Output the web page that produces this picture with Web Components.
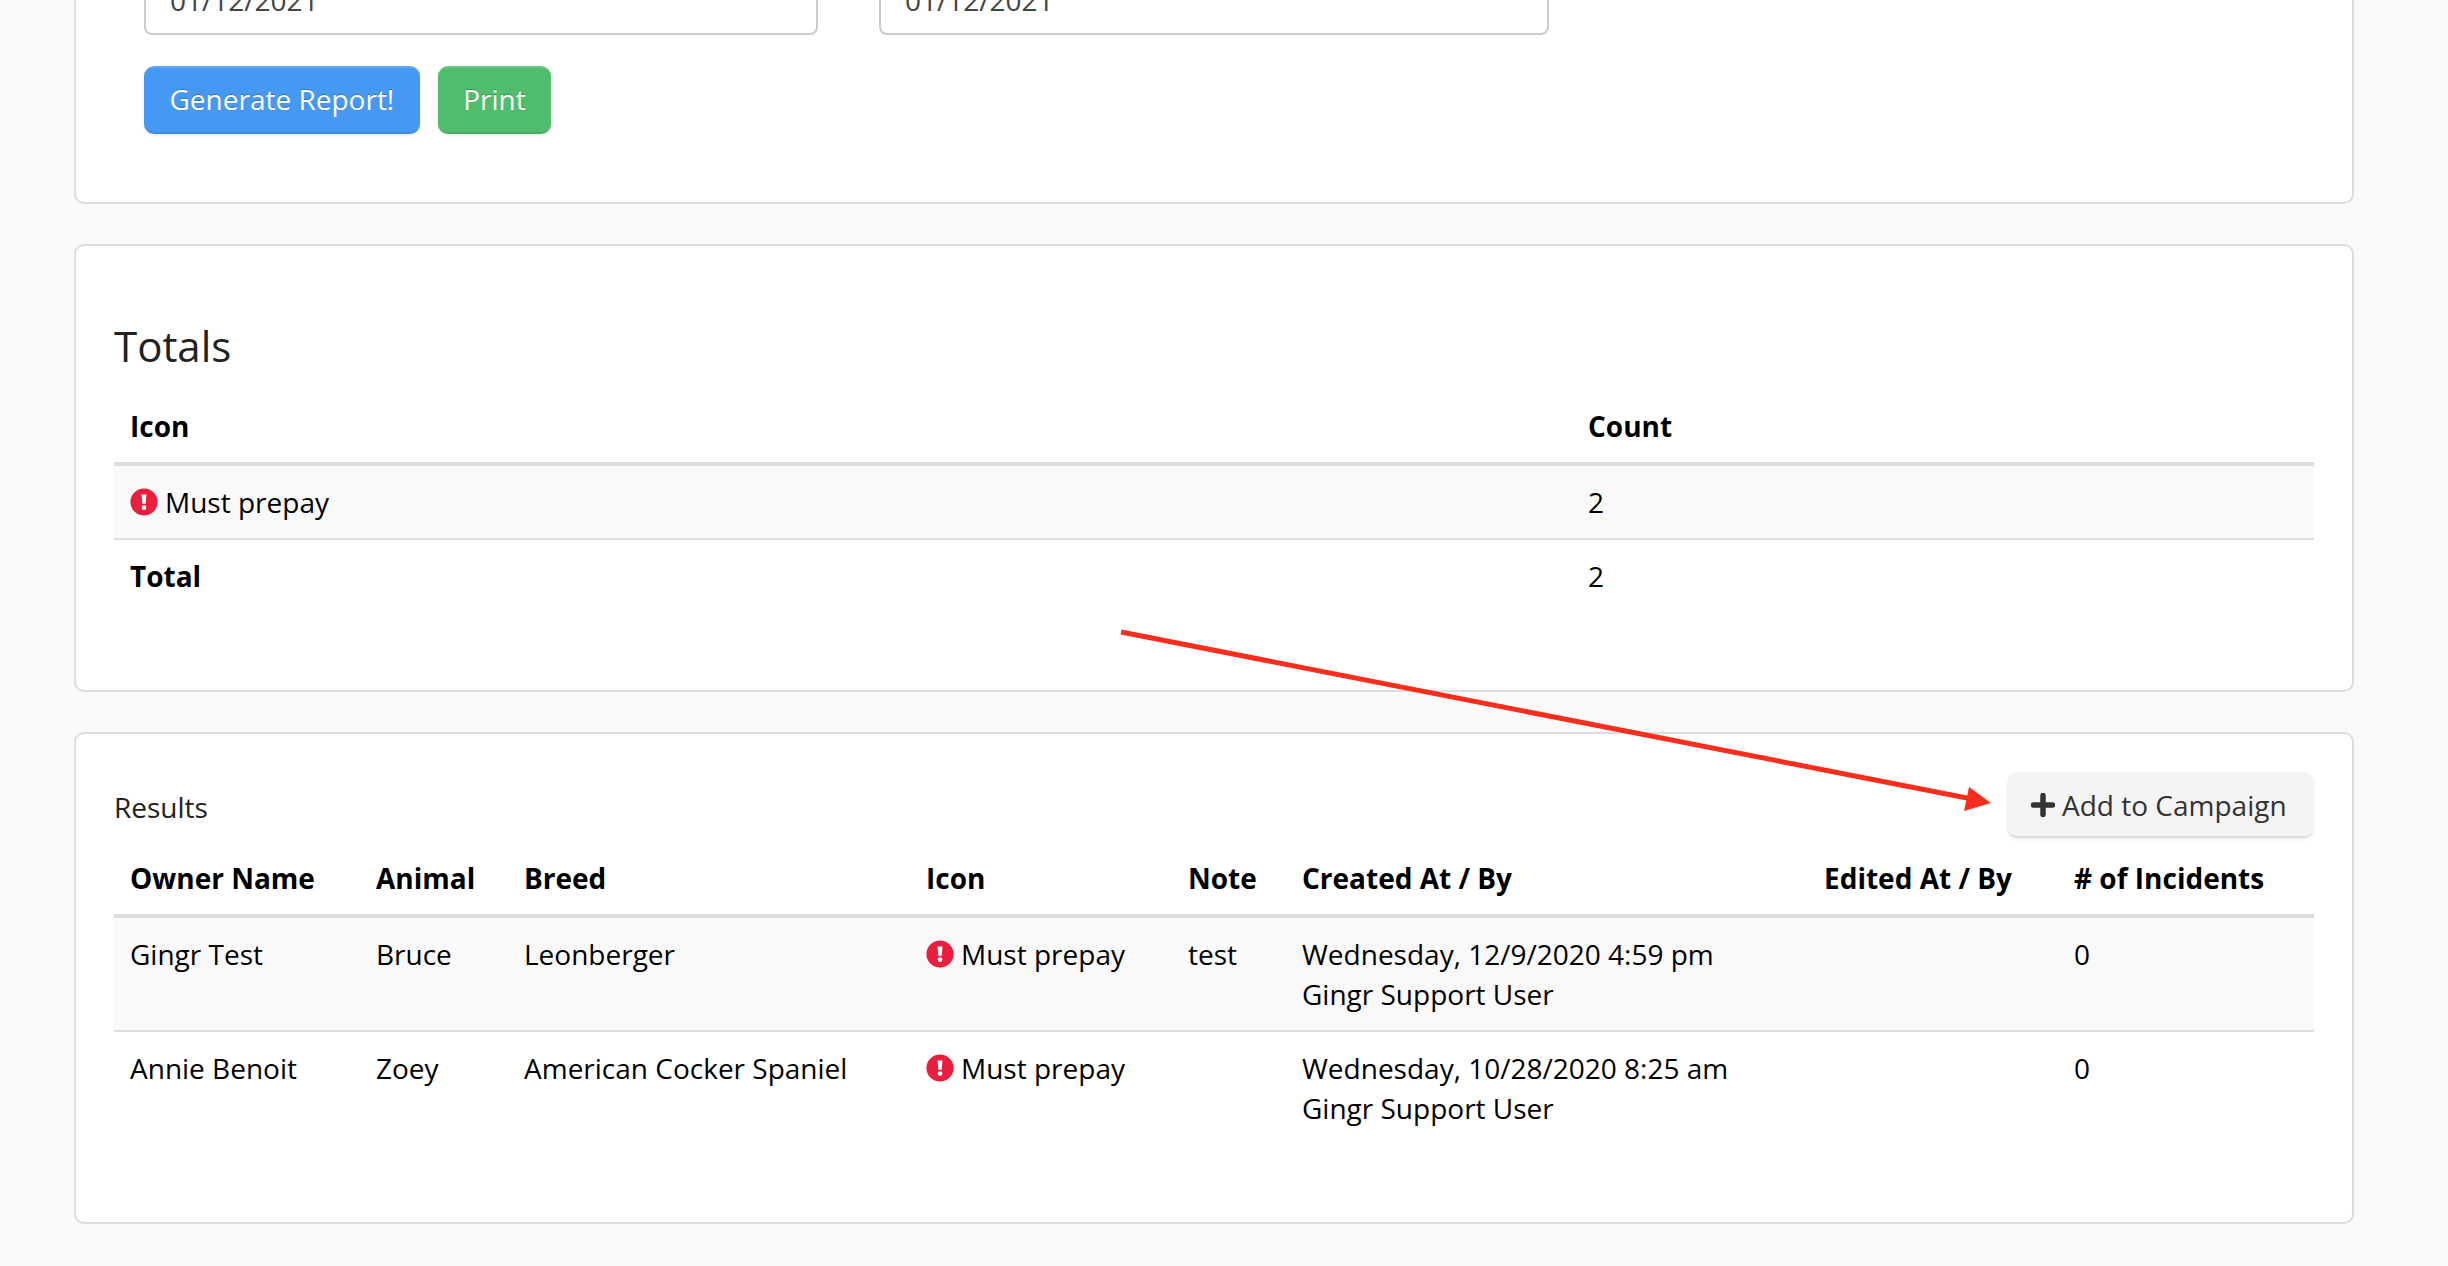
<!DOCTYPE html>
<html lang="en">
<head>
<meta charset="UTF-8">
<title>Report</title>
<style>
  html, body { margin: 0; height: 1266px; overflow: hidden; }
  body {
    position: relative;
    background: #fafafa;
    font-family: "Open Sans", sans-serif;
    font-size: 28px;
    line-height: 40px;
    color: #000;
  }
  main { display: flex; flex-direction: column; gap: 40px; padding: 0 94px 0 74px; margin-top: -100px; }
  .arrow { position: absolute; left: 0; top: 0; }
</style>
</head>
<body>

<template id="panel-card-tpl">
  <style>
    :host { display: block; background: #fff; border: 2px solid #ddd; border-radius: 10px; box-sizing: border-box; }
  </style>
  <slot></slot>
</template>

<template id="date-form-tpl">
  <style>
    :host { display: block; padding: 0 0 0 68px; height: 300px; box-sizing: border-box; }
    .inputs { display: flex; gap: 61px; }
    .buttons { display: flex; gap: 18px; margin-top: 31px; }
  </style>
  <div class="inputs"><slot name="input"></slot></div>
  <div class="buttons"><slot name="button"></slot></div>
</template>

<template id="date-input-tpl">
  <style>
    :host { display: block; width: 674px; height: 68px; box-sizing: border-box; margin-top: 65px; background: #fff; border: 2px solid #ccc; border-radius: 8px; padding: 11px 24px; color: #444; font-size: 28px; line-height: 40px; }
    :host([short]) { width: 670px; }
  </style>
  <slot></slot>
</template>

<template id="action-button-tpl">
  <style>
    :host { display: inline-block; box-sizing: border-box; height: 68px; padding: 11px 25.5px; border-radius: 10px; color: #fff; font-size: 28px; line-height: 40px; text-shadow: 0 -1px 0 rgba(0,0,0,.25); background: var(--bg); border-top: 2px solid var(--hi); border-bottom: 2px solid var(--lo); box-shadow: 0 2px 3px rgba(0,0,0,.08); }
    :host([kind="blue"]) { --bg: #4699f2; --hi: #5ea6f5; --lo: #3f8ad9; }
    :host([kind="green"]) { --bg: #50bd6d; --hi: #68c782; --lo: #48a962; }
  </style>
  <slot></slot>
</template>

<template id="alert-label-tpl">
  <style>
    :host { display: flex; align-items: center; gap: 7px; white-space: nowrap; }
    svg { width: 28px; height: 28px; flex: none; }
  </style>
  <svg viewBox="0 0 28 28"><circle cx="14" cy="14" r="13.6" fill="#ea1f3d"/><path d="M11.6 6.6h4.8l-.7 9.2h-3.4z" fill="#fff"/><circle cx="14" cy="19.6" r="2.3" fill="#fff"/></svg>
  <slot></slot>
</template>

<template id="add-button-tpl">
  <style>
    :host { display: inline-flex; align-items: center; gap: 7px; box-sizing: border-box; width: 307px; height: 66px; padding: 2px 24px 0; background: #f4f4f4; border-bottom: 2px solid #ddd; border-radius: 10px; color: #333; box-shadow: 0 2px 3px rgba(0,0,0,.06); white-space: nowrap; }
    svg { width: 24px; height: 24px; flex: none; }
  </style>
  <svg viewBox="0 0 24 24"><path d="M12 2.5v19M2.5 12h19" stroke="#333" stroke-width="5.5" stroke-linecap="round" fill="none"/></svg>
  <slot></slot>
</template>

<template id="data-table-tpl">
  <style>
    :host { display: block; }
    .grid { display: grid; grid-template-columns: var(--cols); }
  </style>
  <div class="grid"><slot></slot></div>
</template>

<template id="table-row-tpl">
  <style>
    :host { display: grid; grid-template-columns: subgrid; grid-column: 1 / -1; border-bottom: 2px solid #ddd; }
    :host([head]) { border-bottom-width: 4px; font-weight: 700; }
    :host([striped]) { background: #f9f9f9; }
    :host([plain]) { border-bottom: 0; }
  </style>
  <slot></slot>
</template>

<template id="table-cell-tpl">
  <style>
    :host { display: block; padding: 16px; min-width: 0; white-space: nowrap; }
  </style>
  <slot></slot>
</template>

<template id="totals-section-tpl">
  <style>
    :host { display: block; padding: 37px 38px 78px 38px; }
    h3 { margin: 0; font-weight: 400; font-size: 42px; line-height: 52px; color: #222; height: 70px; padding-top: 37px; }
  </style>
  <h3><slot name="title"></slot></h3>
  <slot></slot>
</template>

<template id="results-section-tpl">
  <style>
    :host { display: block; padding: 38px 38px 78px 38px; }
    .top { display: flex; justify-content: space-between; height: 70px; }
    .top div { margin-top: 15px; color: #222; }
  </style>
  <div class="top"><div><slot name="title"></slot></div><span><slot name="action"></slot></span></div>
  <slot></slot>
</template>

<main>
  <panel-card>
    <date-form>
      <date-input slot="input">01/12/2021</date-input>
      <date-input slot="input" short>01/12/2021</date-input>
      <action-button slot="button" kind="blue">Generate Report!</action-button>
      <action-button slot="button" kind="green">Print</action-button>
    </date-form>
  </panel-card>

  <panel-card>
    <totals-section>
      <span slot="title">Totals</span>
      <data-table style="--cols: 1458px 1fr">
        <table-row head><table-cell>Icon</table-cell><table-cell>Count</table-cell></table-row>
        <table-row striped><table-cell><alert-label>Must prepay</alert-label></table-cell><table-cell>2</table-cell></table-row>
        <table-row plain><table-cell><b>Total</b></table-cell><table-cell>2</table-cell></table-row>
      </data-table>
    </totals-section>
  </panel-card>

  <panel-card>
    <results-section>
      <span slot="title">Results</span>
      <add-button slot="action">Add to Campaign</add-button>
      <data-table style="--cols: 246px 148px 402px 262px 114px 522px 250px 1fr">
        <table-row head><table-cell>Owner Name</table-cell><table-cell>Animal</table-cell><table-cell>Breed</table-cell><table-cell>Icon</table-cell><table-cell>Note</table-cell><table-cell>Created At / By</table-cell><table-cell>Edited At / By</table-cell><table-cell># of Incidents</table-cell></table-row>
        <table-row striped><table-cell>Gingr Test</table-cell><table-cell>Bruce</table-cell><table-cell>Leonberger</table-cell><table-cell><alert-label>Must prepay</alert-label></table-cell><table-cell>test</table-cell><table-cell>Wednesday, 12/9/2020 4:59 pm<br>Gingr Support User</table-cell><table-cell></table-cell><table-cell>0</table-cell></table-row>
        <table-row plain><table-cell>Annie Benoit</table-cell><table-cell>Zoey</table-cell><table-cell>American Cocker Spaniel</table-cell><table-cell><alert-label>Must prepay</alert-label></table-cell><table-cell></table-cell><table-cell>Wednesday, 10/28/2020 8:25 am<br>Gingr Support User</table-cell><table-cell></table-cell><table-cell>0</table-cell></table-row>
      </data-table>
    </results-section>
  </panel-card>
</main>

<svg class="arrow" width="2448" height="1266" viewBox="0 0 2448 1266">
  <line x1="1121" y1="632" x2="1972" y2="799" stroke="#fb2d1c" stroke-width="5"/>
  <polygon points="1969,787 1991,803 1964,811" fill="#fb2d1c"/>
</svg>

<script>
  function define(name, tplId) {
    customElements.define(name, class extends HTMLElement {
      constructor() {
        super();
        this.attachShadow({ mode: 'open' });
        this.shadowRoot.appendChild(document.getElementById(tplId).content.cloneNode(true));
      }
    });
  }
  define('panel-card', 'panel-card-tpl');
  define('date-form', 'date-form-tpl');
  define('date-input', 'date-input-tpl');
  define('action-button', 'action-button-tpl');
  define('alert-label', 'alert-label-tpl');
  define('add-button', 'add-button-tpl');
  define('data-table', 'data-table-tpl');
  define('table-row', 'table-row-tpl');
  define('table-cell', 'table-cell-tpl');
  define('totals-section', 'totals-section-tpl');
  define('results-section', 'results-section-tpl');
</script>
</body>
</html>
